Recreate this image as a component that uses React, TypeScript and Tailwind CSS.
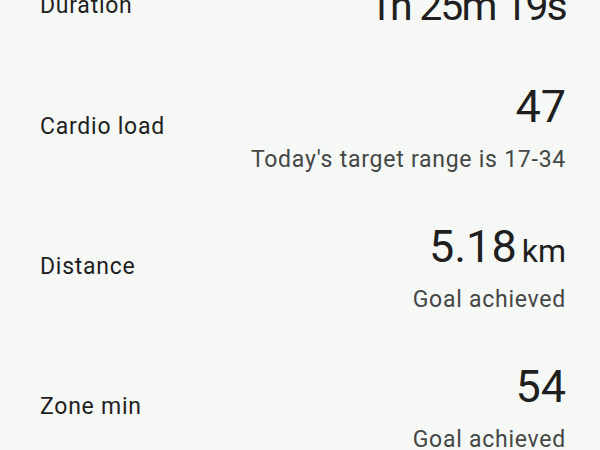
import React from "react";

type Stat = {
  label: string;
  value: React.ReactNode;
  valueClass?: string;
  note?: string;
};

const stats: Stat[] = [
  {
    label: "Duration",
    value: "1h 25m 19s",
    valueClass: "text-[41px] tracking-[-1.8px]",
  },
  { label: "Cardio load", value: "47", note: "Today's target range is 17-34" },
  {
    label: "Distance",
    value: (
      <>
        5.18<span className="ml-[5px] text-[32px] leading-none">km</span>
      </>
    ),
    note: "Goal achieved",
  },
  { label: "Zone min", value: "54", note: "Goal achieved" },
];

function StatRow({ stat }: { stat: Stat }) {
  return (
    <div className="flex items-center justify-between pl-10 pr-[34px] pt-[22px] pb-[23px]">
      <div className="text-[23px] leading-7 tracking-[0.75px] text-[#1f1f1f]">{stat.label}</div>
      <div className="flex flex-col items-end text-right">
        <div
          className={
            "leading-[56px] text-[#1f1f1f] " + (stat.valueClass ?? "text-[45px]")
          }
        >
          {stat.value}
        </div>
        {stat.note && (
          <div className="mt-[11px] text-[23px] leading-7 tracking-[0.75px] text-[#444746]">
            {stat.note}
          </div>
        )}
      </div>
    </div>
  );
}

export default function App() {
  return (
    <div className="h-[450px] w-full overflow-hidden bg-[#f6f8f6] font-['Roboto',sans-serif] antialiased">
      <div className="-mt-[44px]">
        {stats.map((s) => (
          <StatRow key={s.label} stat={s} />
        ))}
      </div>
    </div>
  );
}
